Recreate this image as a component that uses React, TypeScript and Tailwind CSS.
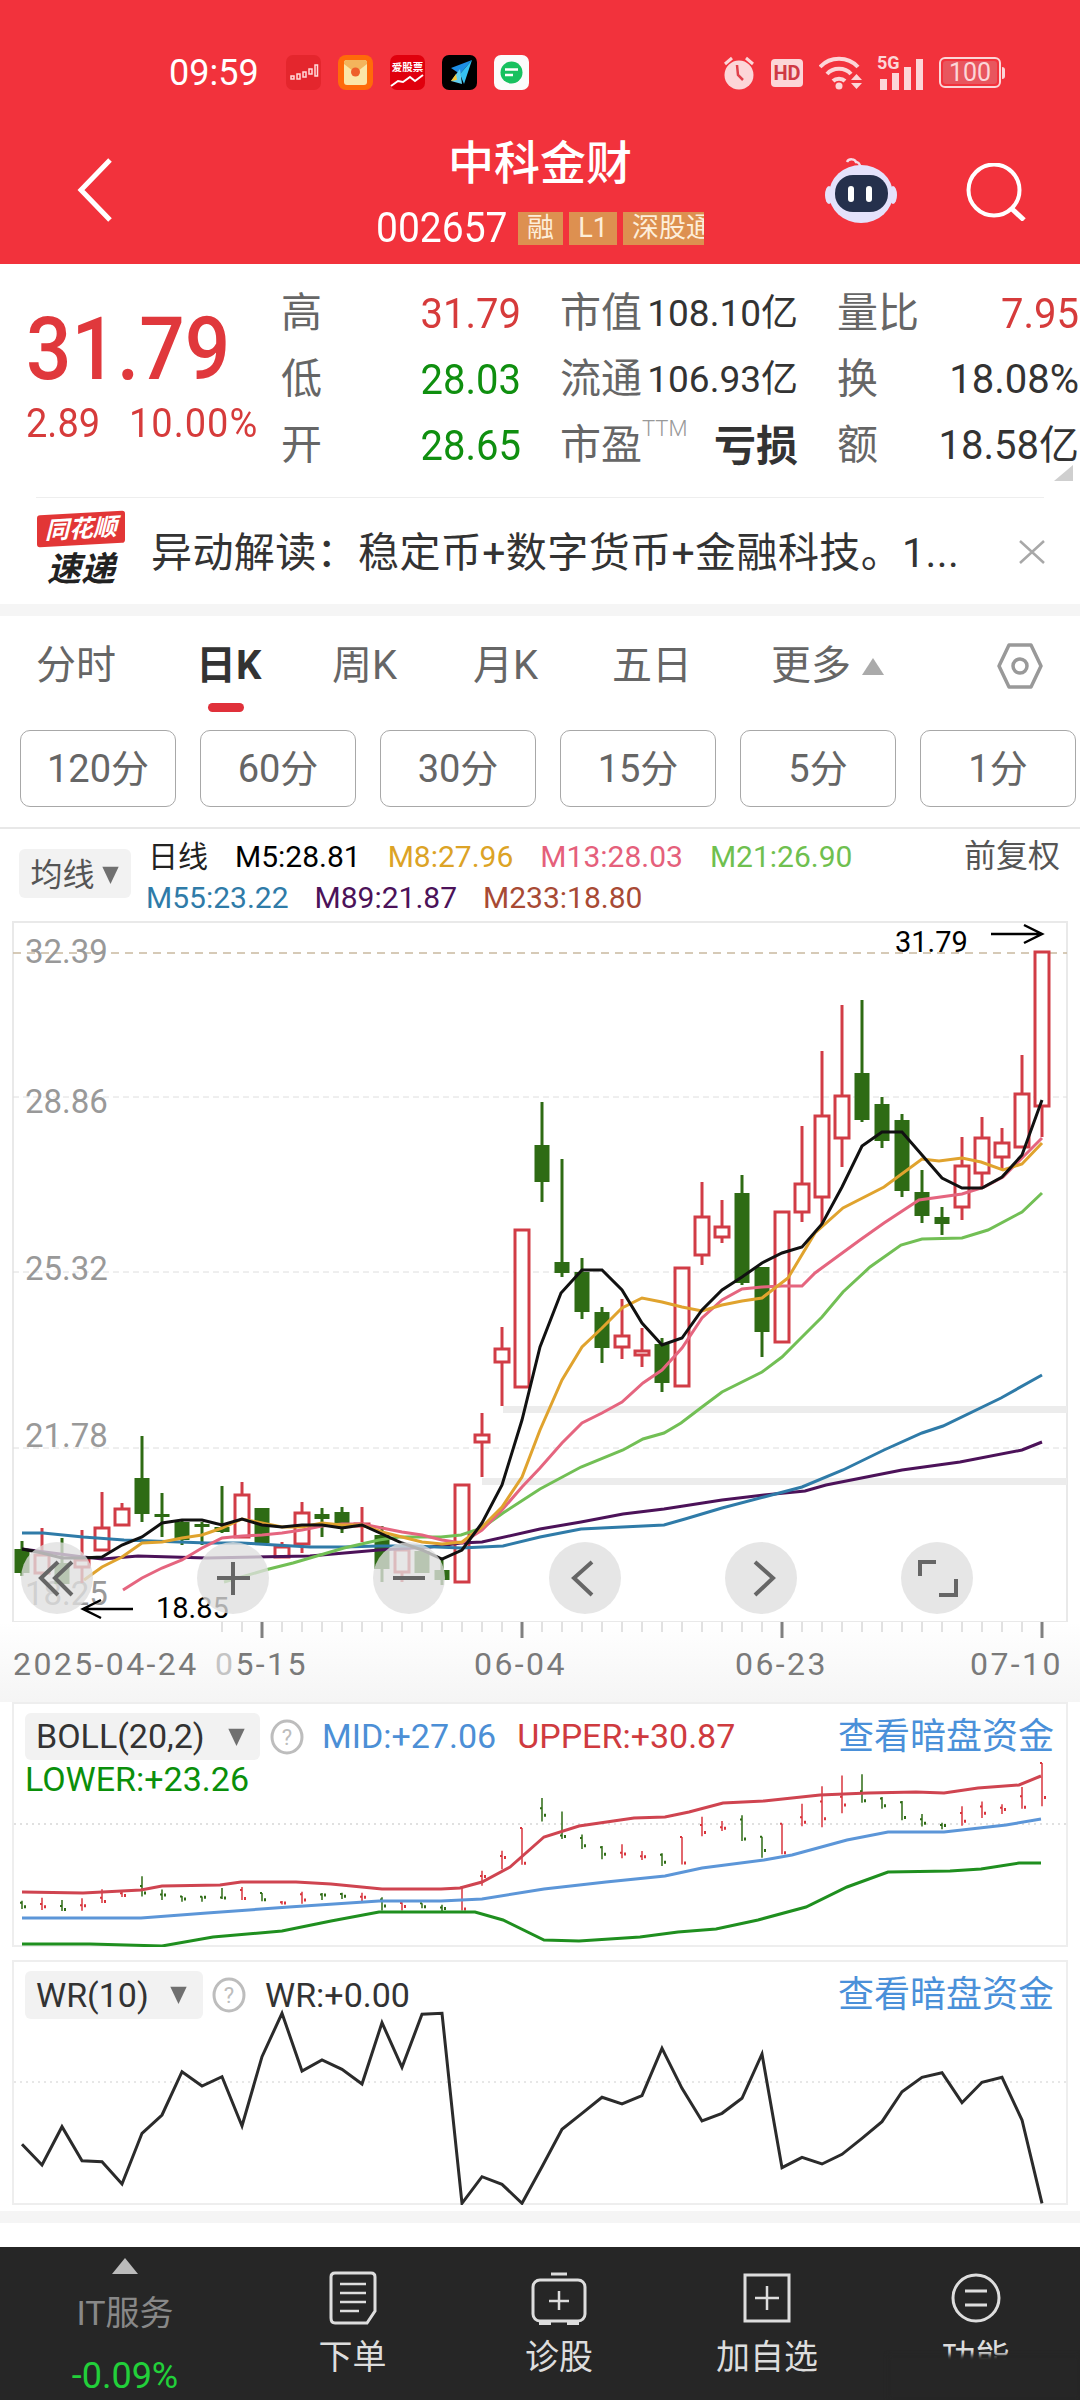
import React from 'react';

type Candle = [number, number, number, number, number]; // up(1)/down(0), wickTop, bodyTop, bodyBot, wickBot

const RED = '#d13c46';
const GREEN = '#2e6b14';

const candles: Candle[] = [
  [0, 1541, 1549, 1573, 1576], [1, 1528, 1555, 1573, 1580], [0, 1538, 1563, 1584, 1585], [1, 1530, 1560, 1567, 1583],
  [1, 1492, 1528, 1550, 1550], [1, 1503, 1509, 1525, 1525], [0, 1436, 1478, 1514, 1522], [0, 1493, 1514, 1516, 1537],
  [0, 1520, 1522, 1540, 1545], [0, 1522, 1524, 1526, 1545], [0, 1486, 1527, 1532, 1533], [1, 1482, 1495, 1537, 1538],
  [0, 1508, 1508, 1543, 1543], [1, 1542, 1547, 1557, 1557], [1, 1502, 1513, 1544, 1553], [0, 1508, 1514, 1519, 1537],
  [0, 1507, 1512, 1528, 1533], [1, 1507, 1524, 1526, 1542], [0, 1526, 1535, 1569, 1582], [1, 1547, 1550, 1572, 1582],
  [0, 1551, 1551, 1573, 1573], [0, 1558, 1570, 1580, 1585], [1, 1485, 1485, 1582, 1582], [1, 1413, 1435, 1442, 1477],
  [1, 1327, 1349, 1362, 1406], [1, 1230, 1230, 1387, 1387], [0, 1102, 1145, 1182, 1202], [0, 1159, 1262, 1273, 1277],
  [0, 1258, 1272, 1312, 1319], [0, 1307, 1312, 1348, 1363], [1, 1299, 1336, 1347, 1359], [1, 1328, 1351, 1355, 1367],
  [0, 1338, 1344, 1383, 1392], [1, 1268, 1268, 1386, 1386], [1, 1182, 1217, 1255, 1265], [1, 1200, 1227, 1237, 1243],
  [0, 1175, 1193, 1283, 1285], [0, 1267, 1267, 1332, 1357], [1, 1212, 1212, 1342, 1342], [1, 1126, 1184, 1212, 1222],
  [1, 1051, 1116, 1197, 1227], [1, 1005, 1096, 1138, 1167], [0, 1000, 1073, 1120, 1122], [0, 1097, 1104, 1141, 1148],
  [0, 1114, 1120, 1191, 1197], [0, 1170, 1192, 1216, 1223], [0, 1207, 1217, 1224, 1235], [1, 1137, 1166, 1207, 1220],
  [1, 1117, 1138, 1173, 1187], [1, 1128, 1143, 1157, 1170], [1, 1055, 1094, 1147, 1147], [1, 952, 952, 1106, 1137],
];

const m5 = '22,1549 42,1553 62,1558 82,1558 102,1557 122,1545 142,1537 162,1523 182,1520 202,1520 222,1525 242,1519 262,1525 282,1527 302,1525 322,1525 342,1528 362,1525 382,1534 402,1543 422,1550 442,1559 462,1550 482,1523 502,1485 522,1420 540,1347 561,1293 582,1270 602,1270 622,1290 642,1323 662,1345 682,1338 702,1310 722,1290 742,1277 762,1263 782,1253 802,1247 822,1224 842,1187 862,1146 882,1132 902,1132 922,1155 942,1178 962,1188 982,1188 1002,1177 1022,1155 1042,1100';
const m8 = '84,1580 102,1567 122,1557 142,1543 162,1542 182,1538 202,1535 222,1528 242,1519 262,1523 282,1527 302,1527 322,1523 342,1525 362,1525 382,1532 402,1537 422,1542 442,1544 462,1542 482,1527 502,1507 522,1477 540,1430 562,1380 582,1347 602,1328 622,1308 642,1298 662,1302 682,1307 702,1311 722,1305 742,1301 762,1298 788,1278 815,1233 843,1208 884,1187 922,1159 939,1161 962,1158 981,1162 1003,1170 1022,1164 1042,1143';
const m13 = '123,1590 142,1578 162,1568 182,1560 202,1548 222,1538 242,1536 262,1535 282,1533 302,1530 322,1526 342,1524 362,1524 382,1528 402,1532 422,1535 442,1540 462,1543 482,1530 502,1510 522,1487 540,1468 562,1443 582,1423 602,1413 622,1402 643,1383 662,1370 682,1348 702,1318 722,1300 742,1289 762,1287 782,1286 802,1286 815,1273 860,1240 884,1223 919,1200 962,1194 984,1187 1003,1177 1022,1158 1042,1138';
const m21 = '224,1582 269,1569 293,1563 344,1548 379,1540 399,1537 441,1537 461,1535 482,1528 503,1513 540,1489 581,1467 623,1450 643,1439 664,1433 681,1423 702,1407 722,1392 762,1372 782,1357 802,1337 822,1317 843,1292 870,1267 901,1245 922,1239 962,1238 988,1230 1022,1212 1042,1193';
const m55 = '22,1533 43,1533 83,1537 124,1540 207,1543 241,1543 310,1547 344,1547 379,1546 413,1546 461,1548 503,1546 540,1537 581,1529 664,1525 685,1519 722,1508 764,1497 802,1487 843,1470 884,1450 922,1433 943,1426 1001,1398 1042,1375';
const m89 = '22,1549 83,1557 103,1559 138,1556 207,1558 310,1556 379,1550 430,1547 461,1543 482,1542 540,1529 581,1522 623,1514 664,1509 722,1500 764,1495 805,1491 826,1485 902,1470 960,1462 1022,1450 1042,1442';

const bollUpper = '22,1892 83,1893 141,1890 162,1886 220,1885 241,1882 296,1882 331,1884 382,1889 441,1889 460,1888 482,1882 510,1867 544,1837 579,1826 634,1818 665,1817 689,1812 723,1803 764,1801 820,1795 868,1793 916,1792 944,1793 978,1788 1019,1785 1041,1776';
const bollMid = '22,1918 141,1918 207,1913 289,1907 379,1901 441,1901 482,1899 544,1889 606,1882 665,1876 702,1868 764,1860 792,1855 847,1840 888,1832 944,1832 1006,1825 1041,1819';
const bollLower = '22,1944 90,1944 162,1946 213,1937 282,1931 331,1921 379,1912 441,1912 475,1912 503,1920 544,1940 579,1941 640,1937 678,1932 716,1929 758,1920 806,1907 847,1887 888,1872 950,1871 981,1869 1019,1863 1041,1863';

const wrRaw = [553, 615, 500, 602, 605, 672, 520, 465, 335, 378, 350, 498, 290, 160, 333, 300, 328, 372, 188, 322, 163, 160, 730, 650, 673, 730, 620, 508, 460, 412, 432, 407, 265, 385, 483, 460, 415, 282, 623, 592, 612, 583, 535, 485, 395, 352, 338, 428, 367, 352, 480, 730];
const wrLine = wrRaw.map((v, i) => `${22 + 20 * i},${(1960 + v / 3).toFixed(1)}`).join(' ');

const ticksX = Array.from({ length: 42 }, (_, i) => 222 + 20 * i);
const majorTicks = [262, 522, 782, 1042];

function MainChart() {
  return (
    <svg viewBox="0 921 1080 701" className="block w-[1080px] h-[701px] shrink-0 font-['Roboto',sans-serif]">
      <rect x="13" y="922" width="1054" height="700" fill="#fff" stroke="#e9e9e9" strokeWidth="2" />
      <rect x="503" y="1406" width="564" height="7" fill="#ececec" />
      <rect x="482" y="1478" width="585" height="7" fill="#ececec" />
      <line x1="13" x2="1067" y1="953" y2="953" stroke="#c9b9a0" strokeWidth="1.5" strokeDasharray="8 6" />
      {[1097, 1272, 1448].map(y => (
        <line key={y} x1="13" x2="1067" y1={y} y2={y} stroke="#dedede" strokeWidth="1" strokeDasharray="6 4" />
      ))}
      <text x="25" y="963" className="text-[33px] fill-[#999]">32.39</text>
      <text x="25" y="1113" className="text-[33px] fill-[#999]">28.86</text>
      <text x="25" y="1280" className="text-[33px] fill-[#999]">25.32</text>
      <text x="25" y="1447" className="text-[33px] fill-[#999]">21.78</text>
      <text x="25" y="1605" className="text-[33px] fill-[#999]">18.25</text>

      {candles.map(([up, wt, bt, bb, wb], i) => {
        const x = 22 + 20 * i;
        const c = up ? RED : GREEN;
        return (
          <g key={i}>
            <line x1={x} x2={x} y1={wt} y2={bt} stroke={c} strokeWidth="3" />
            <line x1={x} x2={x} y1={bb} y2={wb} stroke={c} strokeWidth="3" />
            {up ? (
              <rect x={x - 7} y={bt} width="14" height={bb - bt} fill="#fff" stroke={c} strokeWidth="3" />
            ) : (
              <rect x={x - 7.5} y={bt} width="15" height={Math.max(bb - bt, 3)} fill={c} />
            )}
          </g>
        );
      })}

      <polyline points={m89} fill="none" stroke="#4c1259" strokeWidth="3" />
      <polyline points={m55} fill="none" stroke="#2f7ba8" strokeWidth="3" />
      <polyline points={m21} fill="none" stroke="#72bf55" strokeWidth="3" />
      <polyline points={m13} fill="none" stroke="#e5657f" strokeWidth="3" />
      <polyline points={m8} fill="none" stroke="#e0a32e" strokeWidth="3" />
      <polyline points={m5} fill="none" stroke="#111" strokeWidth="3" />

      <text x="895" y="952" className="text-[29px] fill-black">31.79</text>
      <path d="M991 934H1042M1024 925L1042 934L1024 943" fill="none" stroke="#000" strokeWidth="2.5" />
      <text x="156" y="1618" className="text-[29px] fill-black">18.85</text>
      <path d="M133 1609H83M101 1600L83 1609L101 1618" fill="none" stroke="#000" strokeWidth="2.5" />

      {[57, 233, 409, 585, 761, 937].map(x => (
        <circle key={x} cx={x} cy="1578" r="36" fill="#dfdfdf" fillOpacity="0.78" />
      ))}
      <g fill="none" stroke="#666" strokeWidth="4">
        <path d="M58 1562L41 1578L58 1595M72 1562L55 1578L72 1595" />
        <path d="M217 1578H250M233 1562V1595" />
        <path d="M393 1578H425" />
        <path d="M592 1562L574 1578L592 1595" />
        <path d="M755 1562L773 1578L755 1595" />
        <path d="M920 1576V1562H936M956 1579V1595H939" />
      </g>
    </svg>
  );
}

function AxisRow() {
  return (
    <div className="h-[80px] shrink-0 bg-gradient-to-b from-white to-[#f5f5f5]">
      <svg viewBox="0 1622 1080 16" className="block w-[1080px] h-[16px]">
        {ticksX.map(x => (
          <line key={x} x1={x} x2={x} y1="1622" y2="1632" stroke="#c4c4c4" strokeWidth="1" />
        ))}
        {majorTicks.map(x => (
          <line key={x} x1={x} x2={x} y1="1622" y2="1638" stroke="#808080" strokeWidth="3" />
        ))}
      </svg>
      <div className="flex items-center h-[38px] mt-[7px] pl-[13px] text-[32px] leading-[38px] tracking-[2.4px] text-[#7a7a7a]">
        <span className="w-[202px] shrink-0">2025-04-24</span>
        <span className="w-[259px] shrink-0"><span className="text-[#c4c4c4]">0</span>5-15</span>
        <span className="w-[261px] shrink-0">06-04</span>
        <span className="w-[235px] shrink-0">06-23</span>
        <span className="shrink-0">07-10</span>
      </div>
    </div>
  );
}

function MiniCandles() {
  const map = (y: number) => 1763 + (y - 952) * 0.234;
  return (
    <g>
      {candles.map(([up, wt, bt, bb, wb], i) => {
        const x = 22 + 20 * i;
        const c = up ? '#d8343c' : '#2e6b14';
        const top = map(bt);
        const h = Math.max(map(bb) - top, 2);
        return (
          <g key={i}>
            <line x1={x} x2={x} y1={map(wt)} y2={map(wb)} stroke={c} strokeWidth="1.5" />
            <line x1={x + 3} x2={x + 3} y1={top + h - 3} y2={top + h} stroke={c} strokeWidth="2" />
            <line x1={x - 2} x2={x} y1={top} y2={top} stroke={c} strokeWidth="2" />
          </g>
        );
      })}
    </g>
  );
}

function Caret() {
  return (
    <svg viewBox="0 0 20 22" className="w-[19px] h-[20px] shrink-0">
      <path d="M1 2H19L10 21Z" fill="#707070" />
    </svg>
  );
}

function Help() {
  return (
    <svg viewBox="0 0 34 36" className="w-[34px] h-[36px] shrink-0">
      <ellipse cx="17" cy="18" rx="15" ry="16" fill="none" stroke="#bdbdbd" strokeWidth="3" />
      <text x="17" y="26" textAnchor="middle" className="text-[22px] fill-[#bdbdbd]">?</text>
    </svg>
  );
}

function BollPanel() {
  return (
    <div className="relative h-[245px] shrink-0">
      <div className="h-full mx-[12px] border-2 border-[#eeeeee]" />
      <svg viewBox="0 1702 1080 245" className="absolute inset-0 w-[1080px] h-[245px]">
        <line x1="14" x2="1066" y1="1824" y2="1824" stroke="#d6d6d6" strokeWidth="1.5" strokeDasharray="2 4" />
        <MiniCandles />
        <polyline points={bollUpper} fill="none" stroke="#cf4450" strokeWidth="3" />
        <polyline points={bollMid} fill="none" stroke="#5c96d8" strokeWidth="3" />
        <polyline points={bollLower} fill="none" stroke="#1f8f1f" strokeWidth="3" />
      </svg>
      <div className="absolute left-[25px] top-[11px] right-[26px]">
        <div className="flex items-center h-[47px]">
          <div className="flex items-center w-[235px] h-[47px] pl-[11px] rounded-md bg-[#f2f2f2] text-[34px] text-[#333]">
            <span className="w-[191px]">BOLL(20,2)</span>
            <Caret />
          </div>
          <div className="ml-[10px] mr-[18px]"><Help /></div>
          <span className="text-[34px] text-[#4c8fd6]">MID:+27.06</span>
          <span className="ml-[21px] text-[34px] text-[#cf3b3f]">UPPER:+30.87</span>
          <span className="ml-auto text-[36px] text-[#4a90d9]">查看暗盘资金</span>
        </div>
        <div className="text-[34px] leading-[40px] text-[#0a8f0a] mt-[-1px]">LOWER:+23.26</div>
      </div>
    </div>
  );
}

function WrPanel() {
  return (
    <div className="relative h-[245px] shrink-0">
      <div className="h-full mx-[12px] border-2 border-[#eeeeee]" />
      <svg viewBox="0 1960 1080 245" className="absolute inset-0 w-[1080px] h-[245px]">
        <line x1="14" x2="1066" y1="2082" y2="2082" stroke="#e0e0e0" strokeWidth="1.5" strokeDasharray="2 4" />
        <polyline points={wrLine} fill="none" stroke="#2b2b2b" strokeWidth="3" />
      </svg>
      <div className="absolute left-[25px] top-[11px] right-[26px] flex items-center h-[48px]">
        <div className="flex items-center w-[178px] h-[48px] pl-[11px] rounded-md bg-[#f2f2f2] text-[34px] text-[#333]">
          <span className="w-[133px]">WR(10)</span>
          <Caret />
        </div>
        <div className="ml-[9px] mr-[19px]"><Help /></div>
        <span className="text-[34px] text-[#333]">WR:+0.00</span>
        <span className="ml-auto text-[36px] text-[#4a90d9]">查看暗盘资金</span>
      </div>
    </div>
  );
}

function AppIcons() {
  return (
    <div className="flex items-center gap-[17px]">
      <svg viewBox="0 0 35 35" className="w-[35px] h-[35px]">
        <rect width="35" height="35" rx="7" fill="#e4262d" />
        <g fill="none" stroke="#ffd9d9" strokeWidth="1.5">
          <rect x="5" y="21" width="3" height="3" />
          <rect x="11" y="19" width="3" height="5" />
          <rect x="17" y="17" width="3" height="5" />
          <rect x="23" y="14" width="3" height="5" />
          <rect x="29" y="10" width="2.5" height="11" />
        </g>
      </svg>
      <svg viewBox="0 0 35 35" className="w-[35px] h-[35px]">
        <rect width="35" height="35" rx="8" fill="#ff6a0a" />
        <rect x="6" y="5" width="23" height="25" rx="3" fill="#fbe6a8" />
        <path d="M6 9L17.500 18L29 9V8C29 6 28 5 26 5H9C7 5 6 6 6 8Z" fill="#f3b45c" />
        <circle cx="17.500" cy="17" r="4.500" fill="#ee5f2a" />
      </svg>
      <svg viewBox="0 0 35 35" className="w-[35px] h-[35px]">
        <rect width="35" height="35" rx="7" fill="#e0000d" />
        <text x="17.500" y="16" textAnchor="middle" className="text-[10.500px] fill-white font-bold">爱股票</text>
        <path d="M1 31L8 26L13 27L20 22L25 26L33 20" fill="none" stroke="#fff" strokeWidth="2" />
      </svg>
      <svg viewBox="0 0 35 35" className="w-[35px] h-[35px]">
        <rect width="35" height="35" rx="7" fill="#000" />
        <path d="M30 5L9 13L18 19Z" fill="#1d8fe6" />
        <path d="M30 5L18 19L22 29Z" fill="#35c2f2" />
        <path d="M9 26L18 14L20 29Z" fill="#5fd0f0" />
        <path d="M9 26L14 19L15 25Z" fill="#f5c838" />
      </svg>
      <svg viewBox="0 0 35 35" className="w-[35px] h-[35px]">
        <rect width="35" height="35" rx="7" fill="#fbfbfb" />
        <circle cx="17.500" cy="17.500" r="11" fill="#17c15f" />
        <path d="M11 14.500H24M11 20H19" stroke="#fff" strokeWidth="2.500" />
      </svg>
    </div>
  );
}

function StatusRight() {
  return (
    <div className="flex items-center ml-auto text-[#fcd6d8]">
      <svg viewBox="0 0 32 35" className="w-[32px] h-[35px]">
        <circle cx="16" cy="20" r="14.500" fill="#fcd6d8" />
        <path d="M14 10L15 20L20 25" fill="none" stroke="#e0404a" strokeWidth="2.500" />
        <path d="M2 9L9 3M30 9L23 3" stroke="#fcd6d8" strokeWidth="3" />
      </svg>
      <div className="flex items-center justify-center w-[32px] h-[28px] ml-[16px] rounded-[4px] bg-[#fcd6d8] text-[20px] font-bold text-[#cf3a44]">HD</div>
      <svg viewBox="0 0 44 34" className="w-[44px] h-[34px] ml-[16px]">
        <g fill="none" stroke="#fcd6d8" strokeWidth="4">
          <path d="M1 11C11 0 29 0 39 11" />
          <path d="M8 18C14 11 26 11 32 18" />
          <path d="M14 25C17 22 23 22 26 25" />
        </g>
        <circle cx="20" cy="30" r="3.500" fill="#fcd6d8" />
        <path d="M32 24H43L37.500 18ZM32 27H43L37.500 33Z" fill="#fcd6d8" />
      </svg>
      <div className="relative w-[47px] h-[34px] ml-[14px]">
        <span className="absolute left-0 top-[-2px] text-[18px] font-bold leading-[18px]">5G</span>
        <div className="absolute inset-0 flex items-end justify-between pl-[3px] pr-[1px]">
          <div className="w-[7px] h-[11px] bg-[#fcd6d8]" />
          <div className="w-[7px] h-[17px] bg-[#fcd6d8]" />
          <div className="w-[7px] h-[23px] bg-[#fcd6d8]" />
          <div className="w-[7px] h-[31px] bg-[#fcd6d8]" />
        </div>
      </div>
      <div className="flex items-center ml-[15px]">
        <div className="w-[62px] h-[31px] rounded-[6px] border-2 border-[#fcd6d8] p-[2px]">
          <div className="flex items-center justify-center w-full h-full rounded-[3px] bg-[#e8565e] text-[25px] leading-none">100</div>
        </div>
        <div className="w-[3px] h-[12px] ml-[1px] rounded-r bg-[#fcd6d8]" />
      </div>
    </div>
  );
}

function Header() {
  return (
    <div className="h-[264px] shrink-0 pt-[55px] bg-[#f2323c] text-white">
      <div className="flex items-center h-[35px] pl-[169px] pr-[75px]">
        <span className="w-[117px] text-[36px] leading-none">09:59</span>
        <AppIcons />
        <StatusRight />
      </div>
      <div className="grid grid-cols-[1fr_auto_1fr] items-start pt-[45px] px-[54px]">
        <svg viewBox="0 0 36 64" className="w-[36px] h-[64px] mt-[23px] ml-[23px]">
          <path d="M33 2L4 32L33 62" fill="none" stroke="#fff" strokeWidth="5" />
        </svg>
        <div className="flex flex-col items-center">
          <div className="text-[46px] leading-[56px] font-medium">中科金财</div>
          <div className="flex items-center h-[34px] mt-[20px]">
            <span className="text-[39px] leading-none w-[142px] scale-y-[1.08]">002657</span>
            <span className="flex items-center justify-center w-[45px] h-[33px] bg-[#dd9050] text-[#fdeeda] text-[27px]">融</span>
            <span className="flex items-center justify-center w-[48px] h-[33px] ml-[6px] bg-[#dd9050] text-[#fdeeda] text-[27px]">L1</span>
            <span className="w-[81px] h-[33px] ml-[6px] pl-[9px] overflow-hidden whitespace-nowrap bg-[#dd9050] text-[#fdeeda] text-[27px] leading-[33px]">深股通</span>
          </div>
        </div>
        <div className="flex items-start justify-end gap-[69px] mt-[22px]">
          <svg viewBox="0 0 72 66" className="w-[72px] h-[66px]">
            <path d="M22 5C24 1 30 2 31 5C33 5 35 7 35 10" fill="none" stroke="#f6dbe6" strokeWidth="2.500" />
            <ellipse cx="4" cy="38" rx="4" ry="9" fill="#e6e2fa" />
            <ellipse cx="68" cy="38" rx="4" ry="9" fill="#e6e2fa" />
            <ellipse cx="36" cy="37" rx="32" ry="29" fill="#e4e2fb" />
            <rect x="10" y="18" width="53" height="37" rx="18" fill="#25304c" />
            <rect x="23" y="29" width="6" height="16" rx="3" fill="#fff" />
            <rect x="41" y="29" width="6" height="16" rx="3" fill="#fff" />
          </svg>
          <svg viewBox="0 0 60 58" className="w-[60px] h-[58px] mt-[6px]">
            <circle cx="28" cy="27" r="25.500" fill="none" stroke="#fff" strokeWidth="4" />
            <path d="M46 46L58 57" stroke="#fff" strokeWidth="5" />
          </svg>
        </div>
      </div>
    </div>
  );
}

function QuoteCell({ label, value, valueClass }: { label: React.ReactNode; value: string; valueClass: string }) {
  return (
    <div className="flex items-center justify-between h-[66px]">
      <span className="text-[41px] text-[#666] whitespace-nowrap">{label}</span>
      <span className={valueClass}>{value}</span>
    </div>
  );
}

function Quote() {
  return (
    <div className="relative flex h-[233px] shrink-0">
      <div className="w-[281px] shrink-0 pl-[26px]">
        <div className="mt-[42px] text-[80px] leading-[86px] font-medium text-[#e0383c] scale-y-[1.1] origin-center">31.79</div>
        <div className="flex mt-[8px] text-[38px] leading-[46px] text-[#d63b3b] scale-y-[1.06]">
          <span className="w-[103px]">2.89</span>
          <span className="tracking-[1px]">10.00%</span>
        </div>
      </div>
      <div className="grid grid-cols-[240px_238px_242px] gap-x-[39px] pt-[17px] items-start content-start">
        <QuoteCell label="高" value="31.79" valueClass="text-[40px] text-[#d63b3b] scale-y-[1.08]" />
        <QuoteCell label="市值" value="108.10亿" valueClass="text-[37px] text-[#333]" />
        <QuoteCell label="量比" value="7.95" valueClass="text-[40px] text-[#d63b3b] scale-y-[1.08]" />
        <QuoteCell label="低" value="28.03" valueClass="text-[40px] text-[#0f8f0f] scale-y-[1.08]" />
        <QuoteCell label="流通" value="106.93亿" valueClass="text-[37px] text-[#333]" />
        <QuoteCell label="换" value="18.08%" valueClass="text-[40px] text-[#333]" />
        <QuoteCell label="开" value="28.65" valueClass="text-[40px] text-[#0f8f0f] scale-y-[1.08]" />
        <QuoteCell
          label={<>市盈<sup className="text-[22px] font-light text-[#999] align-[12px]">TTM</sup></>}
          value="亏损"
          valueClass="text-[42px] font-bold text-[#333]"
        />
        <QuoteCell label="额" value="18.58亿" valueClass="text-[40px] text-[#333]" />
      </div>
      <div className="absolute right-[7px] bottom-[16px] w-0 h-0 border-l-[19px] border-l-transparent border-b-[16px] border-b-[#cfcfcf]" />
    </div>
  );
}

function News() {
  return (
    <div className="h-[107px] shrink-0">
      <div className="h-[1px] mx-[36px] bg-[#eeeeee]" />
      <div className="flex items-start pl-[37px] pr-[35px]">
        <div className="w-[88px] shrink-0 mt-[15px]">
          <div className="h-[32px] rounded-[3px] bg-[#e23636] -skew-y-3 text-center text-[24px] leading-[32px] font-bold italic text-white">同花顺</div>
          <div className="mt-[5px] text-center text-[34px] leading-[38px] font-bold italic text-[#222]">速递</div>
        </div>
        <div className="w-[838px] ml-[26px] mt-[33px] text-[41px] leading-[44px] tracking-[0.4px] text-[#333] whitespace-nowrap">异动解读：稳定币+数字货币+金融科技。1...</div>
        <svg viewBox="0 0 26 24" className="w-[26px] h-[24px] ml-auto mt-[42px]">
          <path d="M1 1L25 23M25 1L1 23" stroke="#a8a8a8" strokeWidth="2.500" />
        </svg>
      </div>
    </div>
  );
}

function Tabs() {
  return (
    <div className="relative flex items-center h-[114px] pb-[14px] pl-[36px] text-[40px] text-[#666] shrink-0">
      <span className="w-[160px]">分时</span>
      <span className="w-[136px] font-bold text-[#333]">日K</span>
      <span className="w-[141px]">周K</span>
      <span className="w-[139px]">月K</span>
      <span className="w-[159px]">五日</span>
      <span className="w-[91px]">更多</span>
      <svg viewBox="0 0 22 17" className="w-[22px] h-[17px]">
        <path d="M11 0L22 17H0Z" fill="#aaa" />
      </svg>
      <svg viewBox="0 0 46 46" className="w-[46px] h-[46px] ml-[113px]">
        <path d="M12 2H34L44 23L34 44H12L2 23Z" fill="none" stroke="#999" strokeWidth="3.500" strokeLinejoin="round" />
        <circle cx="23" cy="23" r="7" fill="none" stroke="#999" strokeWidth="3.500" />
      </svg>
      <div className="absolute left-[208px] top-[87px] w-[36px] h-[9px] rounded-full bg-[#e0303a]" />
    </div>
  );
}

function PeriodButtons() {
  return (
    <div className="flex gap-[24px] pl-[20px] h-[77px] shrink-0">
      {['120分', '60分', '30分', '15分', '5分', '1分'].map(t => (
        <div key={t} className="flex items-center justify-center w-[156px] h-[77px] pt-[2px] rounded-[10px] border border-[#a8a8a8] text-[38px] text-[#666]">{t}</div>
      ))}
    </div>
  );
}

function Legend() {
  return (
    <div className="flex h-[92px] shrink-0 border-t-2 border-[#e8e8e8] mt-[20px] box-content">
      <div className="flex items-center justify-center gap-[6px] w-[112px] h-[49px] pt-[3px] ml-[19px] mt-[20px] rounded-md bg-[#f2f2f2] text-[32px] text-[#555]">
        均线<Caret />
      </div>
      <div className="ml-[17px] pt-[7px] text-[30px] leading-[41px]">
        <div className="flex gap-[27px]">
          <span className="text-[#222]">日线</span>
          <span className="text-black">M5:28.81</span>
          <span className="text-[#dca326]">M8:27.96</span>
          <span className="text-[#e5607b]">M13:28.03</span>
          <span className="text-[#6fc04f]">M21:26.90</span>
        </div>
        <div className="flex gap-[26px] ml-[-2px]">
          <span className="text-[#2f7ba8]">M55:23.22</span>
          <span className="text-[#4c1259]">M89:21.87</span>
          <span className="text-[#a84a34]">M233:18.80</span>
        </div>
      </div>
      <span className="ml-auto mr-[20px] mt-[7px] text-[32px] leading-[41px] text-[#555]">前复权</span>
    </div>
  );
}

function BottomBar() {
  return (
    <div className="relative grid grid-cols-[250px_205px_208px_208px_209px] h-[153px] shrink-0 bg-[#262626] text-[#dddddd]">
      <div className="flex flex-col items-center pt-[11px]">
        <svg viewBox="0 0 26 16" className="w-[26px] h-[16px]"><path d="M13 0L26 16H0Z" fill="#bbb" /></svg>
        <span className="mt-[20px] text-[34px] leading-[38px] text-[#888]">IT服务</span>
        <span className="mt-[24px] text-[36px] leading-[40px] text-[#22d03a]">-0.09%</span>
      </div>
      <div className="flex flex-col items-center pt-[24px]">
        <svg viewBox="0 0 48 54" className="w-[48px] h-[54px]">
          <path d="M6 2H42C45 2 46 4 46 6V40L38 52H6C3 52 2 50 2 47V6C2 4 3 2 6 2Z" fill="none" stroke="#ddd" strokeWidth="3" />
          <path d="M11 13H37M11 22H37M11 31H37M11 40H30" stroke="#ddd" strokeWidth="2.500" />
        </svg>
        <span className="mt-[14px] text-[34px] leading-[36px]">下单</span>
      </div>
      <div className="flex flex-col items-center pt-[24px]">
        <svg viewBox="0 0 56 54" className="w-[56px] h-[54px]">
          <path d="M20 3H36" stroke="#ddd" strokeWidth="3" />
          <rect x="2" y="9" width="52" height="41" rx="7" fill="none" stroke="#ddd" strokeWidth="3" />
          <path d="M28 20V39M18 30H38" stroke="#ddd" strokeWidth="2.500" />
          <path d="M8 50H20V54H8ZM36 50H48V54H36Z" fill="#ddd" />
        </svg>
        <span className="mt-[14px] text-[34px] leading-[36px]">诊股</span>
      </div>
      <div className="flex flex-col items-center pt-[26px]">
        <svg viewBox="0 0 48 50" className="w-[48px] h-[50px]">
          <rect x="2" y="2" width="44" height="46" fill="none" stroke="#ddd" strokeWidth="3" />
          <path d="M24 13V37M12 25H36" stroke="#ddd" strokeWidth="2.500" />
        </svg>
        <span className="mt-[16px] text-[34px] leading-[36px]">加自选</span>
      </div>
      <div className="flex flex-col items-center pt-[26px]">
        <svg viewBox="0 0 50 50" className="w-[50px] h-[50px]">
          <circle cx="25" cy="25" r="23" fill="none" stroke="#ddd" strokeWidth="3" />
          <path d="M14 18H36M14 32H36" stroke="#ddd" strokeWidth="3" />
        </svg>
        <span className="mt-[16px] text-[34px] leading-[36px]">功能</span>
      </div>
      <div className="absolute left-[888px] top-[108px] w-[192px] h-[45px] bg-[#262626] blur-[2px]" />
    </div>
  );
}

export default function App() {
  return (
    <div className="flex flex-col w-[1080px] h-[2400px] overflow-hidden bg-white font-['Roboto','Noto_Sans_CJK_SC',sans-serif]">
      <Header />
      <Quote />
      <News />
      <div className="h-[12px] shrink-0 bg-[#f5f5f5]" />
      <Tabs />
      <PeriodButtons />
      <Legend />
      <MainChart />
      <AxisRow />
      <BollPanel />
      <div className="h-[13px] shrink-0" />
      <WrPanel />
      <div className="h-[6px] shrink-0" />
      <div className="h-[12px] shrink-0 bg-[#f5f5f5]" />
      <div className="h-[24px] shrink-0" />
      <BottomBar />
    </div>
  );
}
